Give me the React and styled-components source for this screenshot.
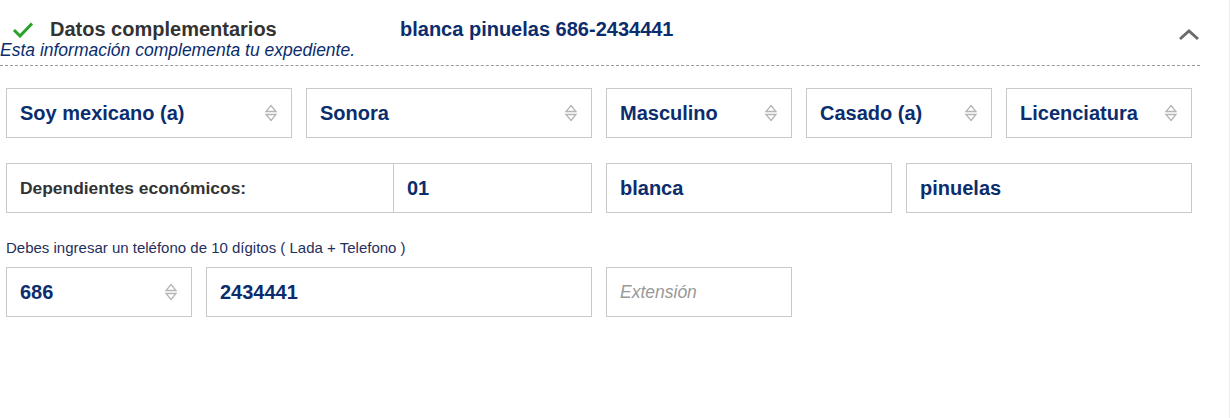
import React from "react";
import styled, { createGlobalStyle } from "styled-components";

const GlobalStyle = createGlobalStyle`
  body {
    margin: 0;
    background: #fff;
    font-family: "Liberation Sans", Arial, sans-serif;
  }
`;

const Page = styled.div`
  width: 1229px;
  height: 418px;
  border-right: 1px solid #ececec;
  box-sizing: content-box;
`;

const Section = styled.div`
  width: 1200px;
`;

const Header = styled.div`
  position: relative;
  padding-top: 17px;
  border-bottom: 1px dashed #9a9a9a;
  padding-bottom: 6px;
`;

const TitleRow = styled.div`
  display: flex;
  align-items: center;
  height: 24px;
`;

const Check = styled.span`
  width: 50px;
  padding-left: 12px;
  box-sizing: border-box;
  display: flex;
  align-items: center;
`;

const Title = styled.h3`
  margin: 0;
  width: 350px;
  font-size: 20px;
  font-weight: 700;
  color: #333;
`;

const Summary = styled.span`
  font-size: 20px;
  font-weight: 700;
  color: #0b2d6e;
`;

const Subtitle = styled.p`
  margin: 0;
  font-size: 17.5px;
  font-style: italic;
  color: #0b2d6e;
  line-height: 18px;
`;

const Toggle = styled.button`
  position: absolute;
  right: 0;
  top: 28px;
  border: 0;
  background: none;
  padding: 0;
  width: 22px;
  height: 14px;
  cursor: pointer;
`;

const Grid = styled.div`
  display: grid;
  grid-template-columns: repeat(12, 86px);
  column-gap: 14px;
  padding-left: 6px;
  margin-top: ${(p) => p.$top || 0}px;
`;

const Field = styled.div`
  grid-column: span ${(p) => p.$span || 1};
  height: 50px;
  border: 1px solid #c9c9c9;
  box-sizing: border-box;
  display: flex;
  align-items: center;
  padding: 0 13px;
  font-size: 20px;
  font-weight: 700;
  color: #0b2d6e;
`;

const Value = styled.span`
  flex: 1;
  ${(p) =>
    p.$placeholder &&
    `
    font-weight: 400;
    font-style: italic;
    font-size: 17.5px;
    color: #999;
  `}
`;

const Split = styled.div`
  grid-column: span 6;
  display: flex;
  height: 50px;
`;

const Label = styled.div`
  width: 387px;
  flex-shrink: 0;
  height: 50px;
  border: 1px solid #c9c9c9;
  border-right: 0;
  box-sizing: border-box;
  display: flex;
  align-items: center;
  padding: 0 13px;
  font-size: 17.4px;
  font-weight: 700;
  color: #333;
`;

const SplitInput = styled(Field)`
  flex: 1;
`;

const Hint = styled.p`
  margin: 26px 0 0 6px;
  font-size: 15px;
  color: #1f2f5c;
  line-height: 17px;
`;

const Arrows = () => (
  <svg width="14" height="18" viewBox="0 0 14 18">
    <path d="M7 1.5 L12 7.5 H2 Z" fill="none" stroke="#b5b5b5" strokeWidth="1.3" />
    <path d="M7 16.5 L12 10.5 H2 Z" fill="none" stroke="#b5b5b5" strokeWidth="1.3" />
  </svg>
);

const Select = ({ span, children }) => (
  <Field $span={span}>
    <Value>{children}</Value>
    <Arrows />
  </Field>
);

export default function App() {
  return (
    <Page>
      <GlobalStyle />
      <Section>
        <Header>
          <TitleRow>
            <Check>
              <svg width="22" height="17" viewBox="0 0 22 17">
                <path d="M2 9 L8 15 L20 2.5" fill="none" stroke="#27a22a" strokeWidth="3" />
              </svg>
            </Check>
            <Title>Datos complementarios</Title>
            <Summary>blanca pinuelas 686-2434441</Summary>
          </TitleRow>
          <Subtitle>Esta información complementa tu expediente.</Subtitle>
          <Toggle aria-label="Contraer">
            <svg width="22" height="14" viewBox="0 0 22 14">
              <path d="M2 11 L11 3 L20 11" fill="none" stroke="#6b6b6b" strokeWidth="3" />
            </svg>
          </Toggle>
        </Header>

        <Grid $top={22}>
          <Select span={3}>Soy mexicano (a)</Select>
          <Select span={3}>Sonora</Select>
          <Select span={2}>Masculino</Select>
          <Select span={2}>Casado (a)</Select>
          <Select span={2}>Licenciatura</Select>
        </Grid>

        <Grid $top={25}>
          <Split>
            <Label>Dependientes económicos:</Label>
            <SplitInput>
              <Value>01</Value>
            </SplitInput>
          </Split>
          <Field $span={3}>
            <Value>blanca</Value>
          </Field>
          <Field $span={3}>
            <Value>pinuelas</Value>
          </Field>
        </Grid>

        <Hint>Debes ingresar un teléfono de 10 dígitos ( Lada + Telefono )</Hint>

        <Grid $top={11}>
          <Select span={2}>686</Select>
          <Field $span={4}>
            <Value>2434441</Value>
          </Field>
          <Field $span={2}>
            <Value $placeholder>Extensión</Value>
          </Field>
        </Grid>
      </Section>
    </Page>
  );
}
